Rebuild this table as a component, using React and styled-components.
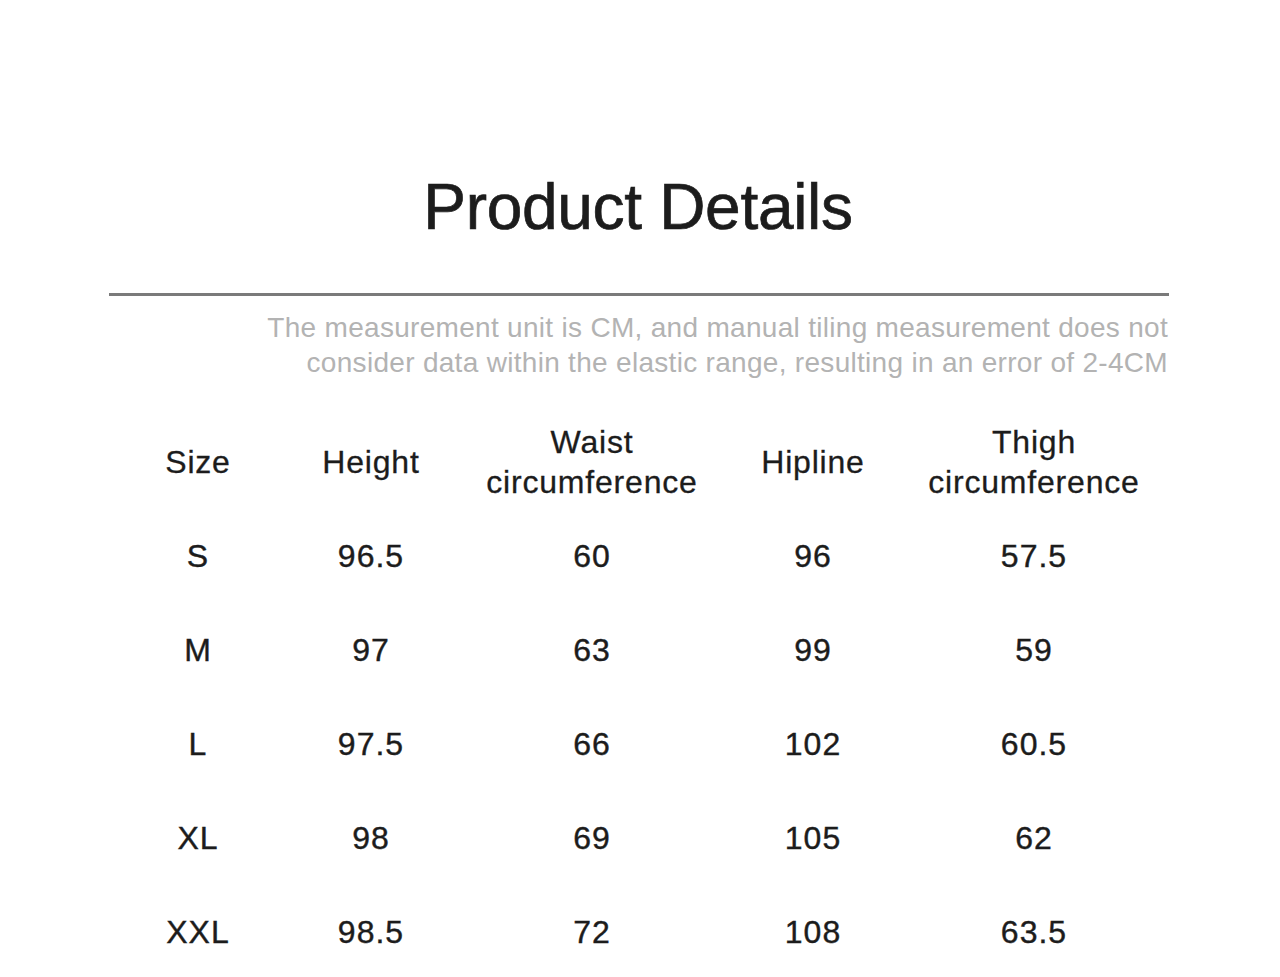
import React from "react";
import styled, { createGlobalStyle } from "styled-components";

const GlobalStyle = createGlobalStyle`
  body {
    margin: 0;
    background: #fff;
    font-family: "Liberation Sans", Arial, sans-serif;
    color: #1c1c1c;
  }
`;

const Page = styled.div`
  width: 1280px;
  height: 977px;
  overflow: hidden;
  padding-top: 175px;
  box-sizing: border-box;
`;

const Title = styled.h1`
  margin: 0;
  text-align: center;
  font-size: 64px;
  line-height: 1;
  font-weight: 400;
  letter-spacing: -0.3px;
  -webkit-text-stroke: 0.7px #1c1c1c;
  padding-right: 4px;
`;

const Rule = styled.div`
  margin: 54px 111px 0 109px;
  height: 3px;
  background: #7a7a7a;
`;

const Note = styled.p`
  margin: 14px 112px 0 0;
  text-align: right;
  font-size: 28px;
  line-height: 35px;
  letter-spacing: 0.3px;
  color: #b3b3b3;
`;

const Table = styled.div`
  display: grid;
  grid-template-columns: 160px 186px 256px 186px 256px;
  grid-auto-rows: 94px;
  margin: 35px 0 0 118px;
`;

const HeadCell = styled.div`
  display: flex;
  align-items: center;
  justify-content: center;
  text-align: center;
  font-size: 32px;
  line-height: 40px;
  letter-spacing: 0.8px;
  -webkit-text-stroke: 0.3px #1c1c1c;
`;

const Cell = styled.div`
  display: flex;
  align-items: center;
  justify-content: center;
  font-size: 32px;
  letter-spacing: 1px;
  -webkit-text-stroke: 0.4px #1c1c1c;
`;

const headers = [
  ["Size"],
  ["Height"],
  ["Waist", "circumference"],
  ["Hipline"],
  ["Thigh", "circumference"],
];

const rows = [
  ["S", "96.5", "60", "96", "57.5"],
  ["M", "97", "63", "99", "59"],
  ["L", "97.5", "66", "102", "60.5"],
  ["XL", "98", "69", "105", "62"],
  ["XXL", "98.5", "72", "108", "63.5"],
];

const App = () => {
  return (
    <>
      <GlobalStyle />
      <Page>
        <Title>Product Details</Title>
        <Rule />
        <Note>
          The measurement unit is CM, and manual tiling measurement does not
          <br />
          consider data within the elastic range, resulting in an error of 2-4CM
        </Note>
        <Table>
          {headers.map((h, i) => (
            <HeadCell key={i}>
              <div>
                {h.map((line, j) => (
                  <div key={j}>{line}</div>
                ))}
              </div>
            </HeadCell>
          ))}
          {rows.map(row =>
            row.map((v, i) => <Cell key={row[0] + i}>{v}</Cell>)
          )}
        </Table>
      </Page>
    </>
  );
};

export default App;
